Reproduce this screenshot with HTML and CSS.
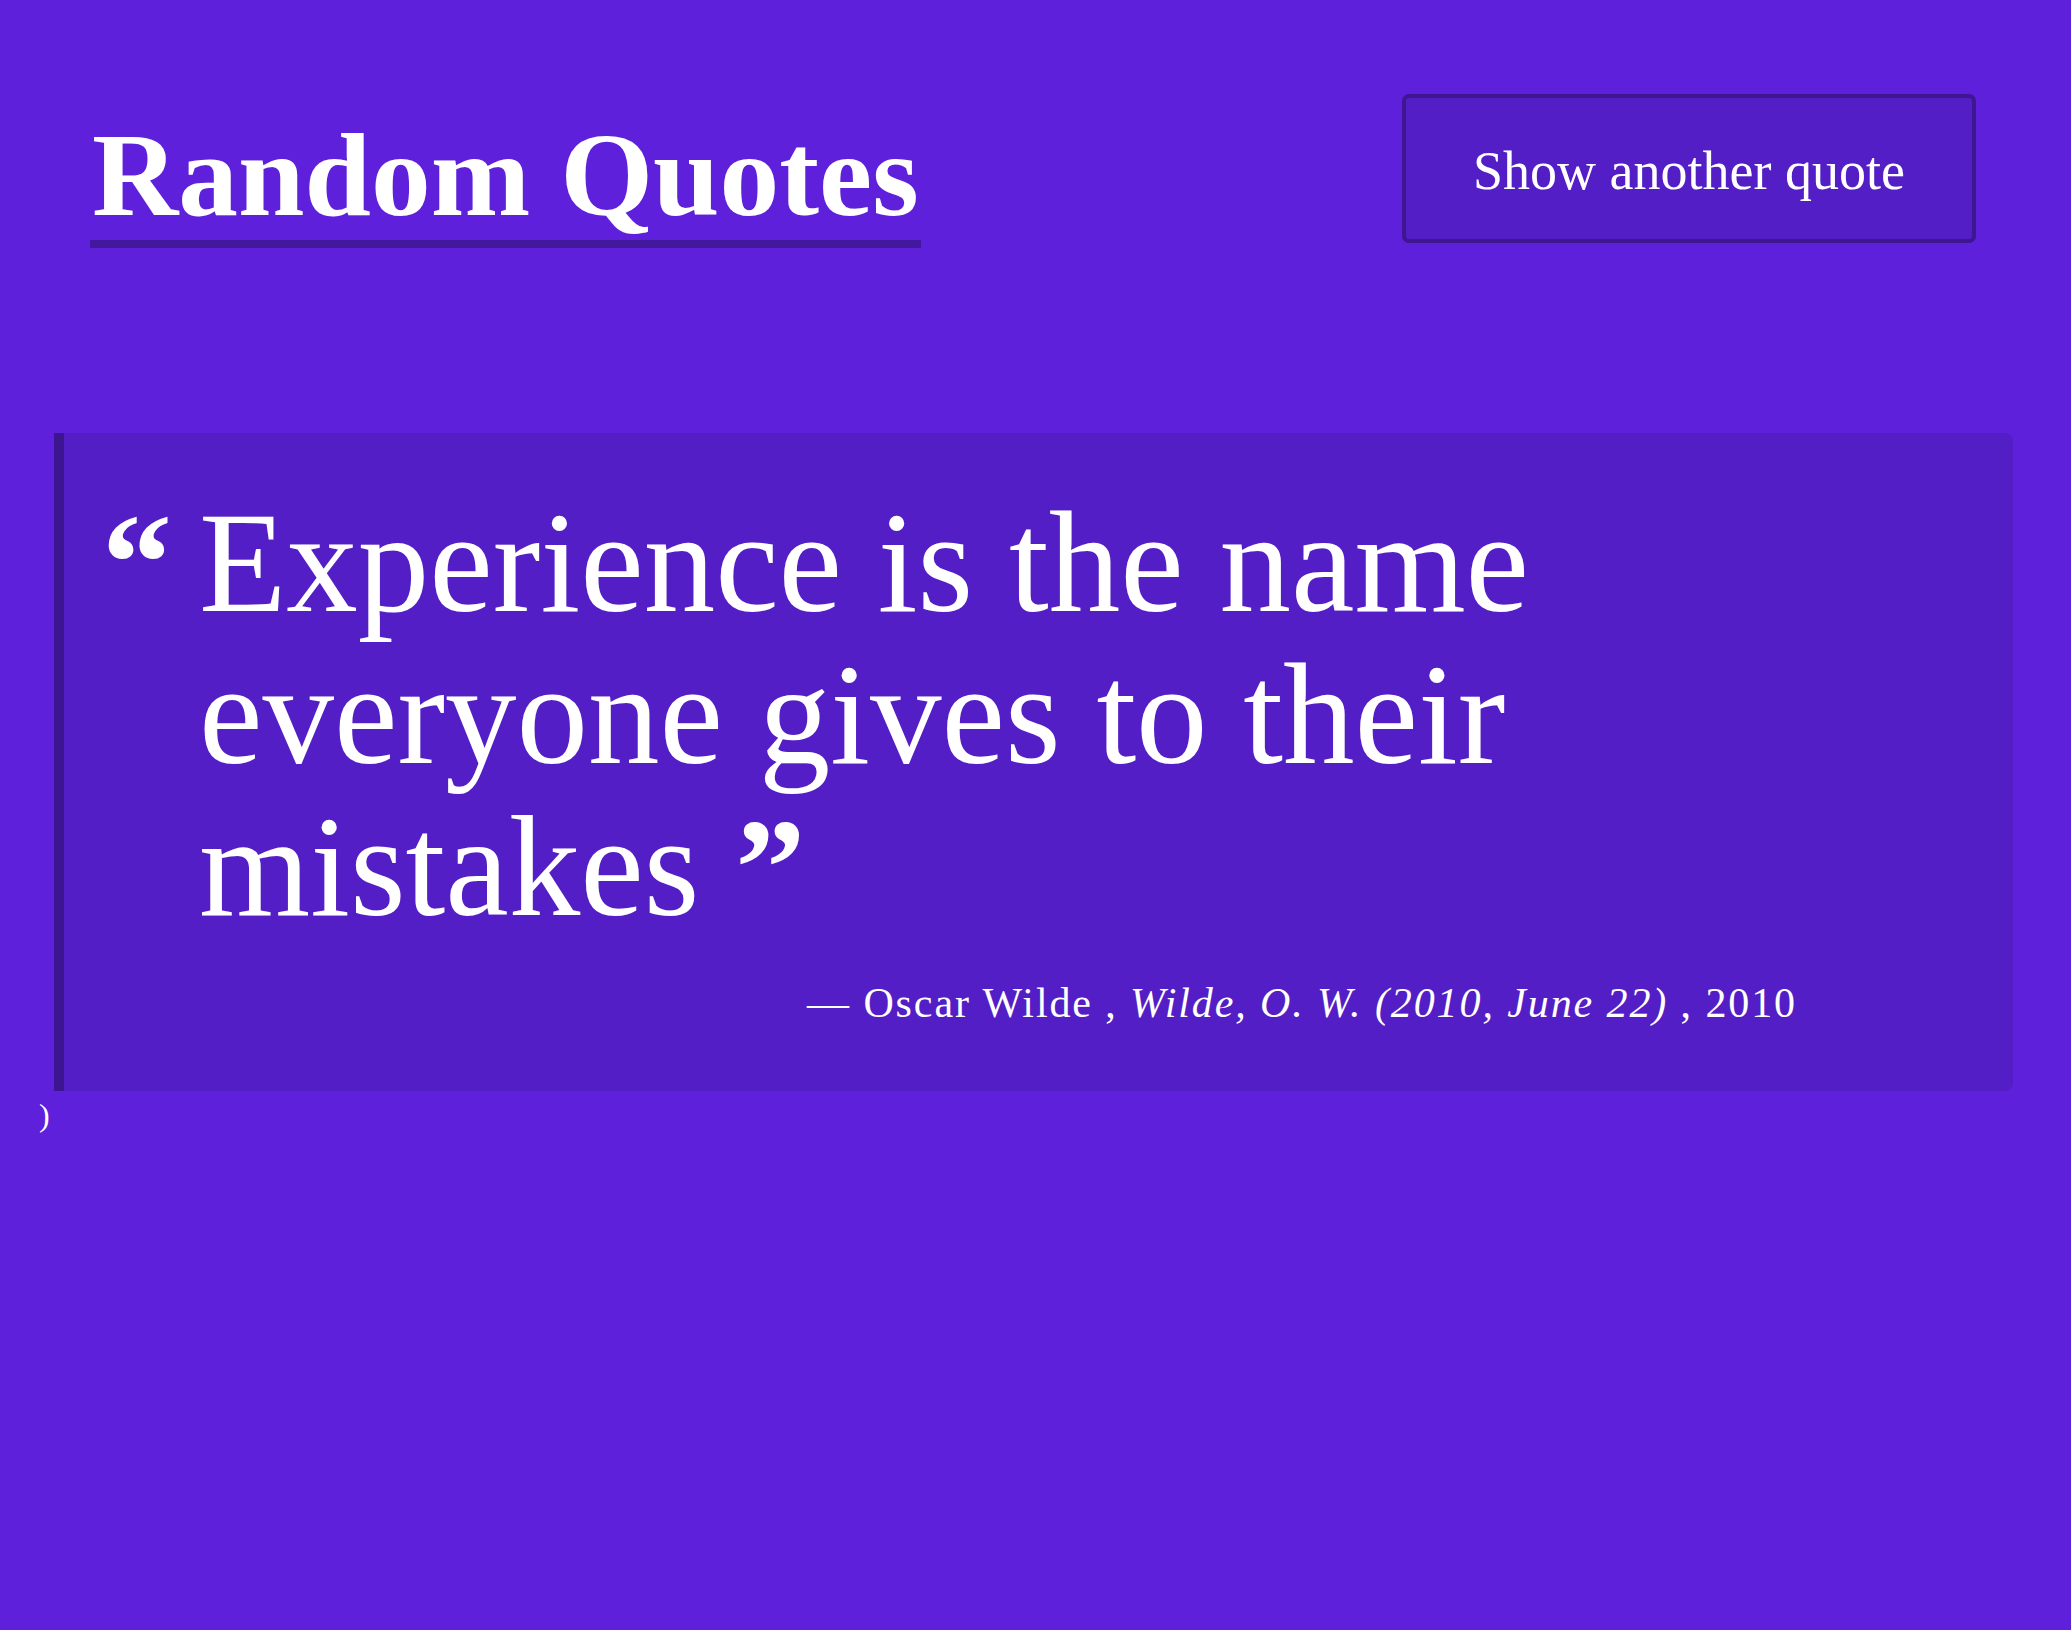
FILE: index.html
```html
<!DOCTYPE html>
<html lang="en">
<head>
<meta charset="utf-8">
<title>Random Quotes</title>
<link rel="stylesheet" href="styles.css">
</head>
<body>
<header class="site-header">
  <h1 class="site-title">Random Quotes</h1>
  <button class="next-btn" type="button">Show another quote</button>
</header>
<main class="page">
  <blockquote class="quote-card">
    <div class="quote-body">
      <span class="quote-open">“</span>
      <p class="quote-text">Experience is the name everyone gives to their mistakes <span class="quote-close">”</span></p>
    </div>
    <footer class="quote-source">— Oscar Wilde , <cite class="quote-cite">Wilde, O. W. (2010, June 22)</cite> , 2010</footer>
  </blockquote>
  <div class="stray">)</div>
</main>
</body>
</html>
```

FILE: styles.css
```css
html, body {
  margin: 0;
  padding: 0;
}
body {
  background: #5e20db;
  color: #ffffff;
  font-family: "Liberation Serif", "Times New Roman", serif;
  min-height: 1630px;
}
.site-header {
  display: flex;
  justify-content: space-between;
  align-items: flex-start;
  padding: 94px 95px 0 90px;
}
.site-title {
  margin: 16px 0 0 0;
  font-size: 119.5px;
  font-weight: 700;
  line-height: 130px;
  border-bottom: 8px solid #43189e;
  padding: 0 2px;
}
.next-btn {
  box-sizing: border-box;
  width: 574px;
  height: 149px;
  background: #531ec5;
  border: 4px solid #3e1690;
  border-radius: 7px;
  color: #ffffff;
  font-family: "Liberation Serif", "Times New Roman", serif;
  font-size: 54px;
  padding: 5px 0 0 0;
  display: flex;
  align-items: center;
  justify-content: center;
}
.page {
  padding-top: 185px;
}
.quote-card {
  margin: 0 58px 0 54px;
  background: #531ec5;
  border-left: 10px solid #3d1590;
  border-radius: 0 8px 8px 0;
  padding: 54px 50px 64px 38px;
}
.quote-body {
  display: flex;
  align-items: flex-start;
}
.quote-open {
  flex: none;
  width: 97px;
  font-size: 140px;
  font-weight: 700;
  line-height: 152px;
  height: 152px;
  margin-top: 0;
}
.quote-text {
  margin: 0;
  font-size: 143px;
  line-height: 152px;
}
.quote-close {
  font-size: 140px;
  font-weight: 700;
  line-height: 0;
}
.quote-source {
  margin-top: 36px;
  text-align: right;
  padding-right: 166px;
  font-size: 42px;
  letter-spacing: 1.9px;
}
.quote-cite {
  font-style: italic;
}
.stray {
  margin: 6px 0 0 39px;
  font-size: 32px;
}
```
